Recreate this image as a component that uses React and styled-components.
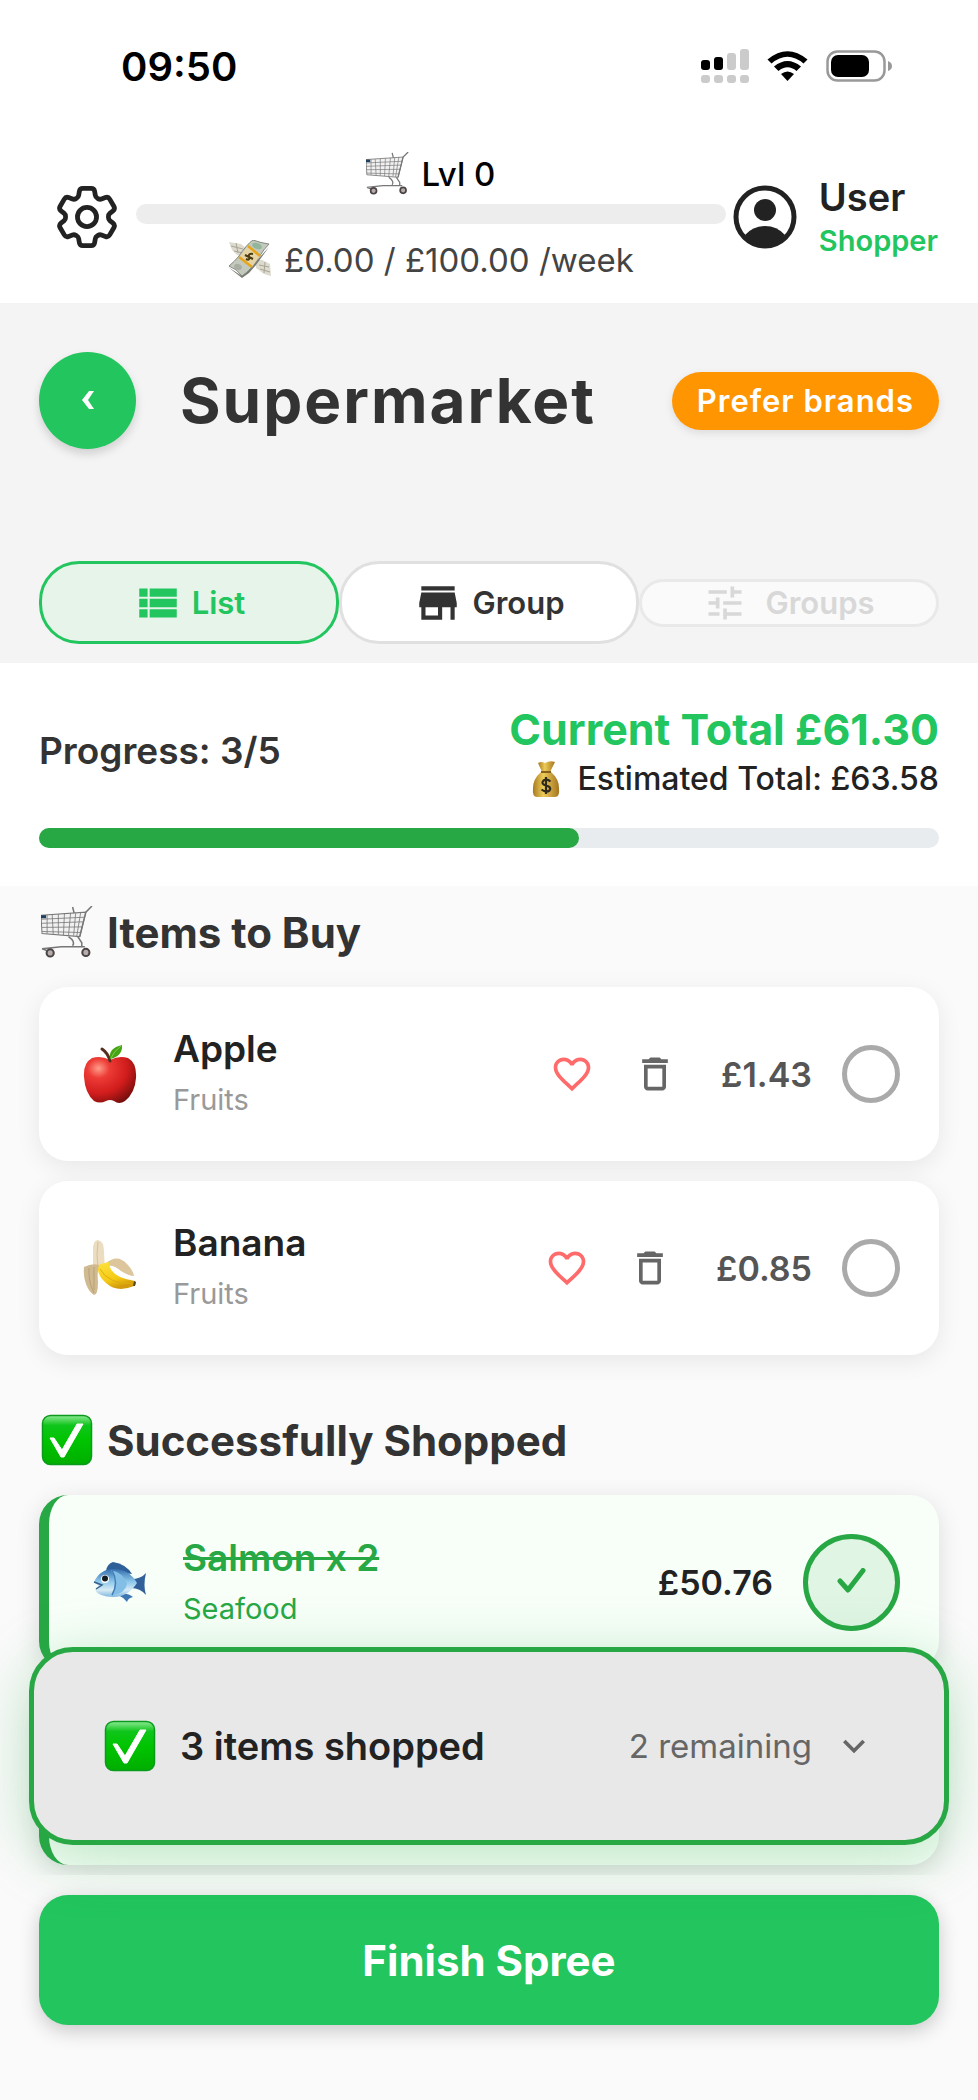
import React, { useState } from "react";
import styled, { createGlobalStyle } from "styled-components";
import {
  MdViewList,
  MdStore,
  MdTune,
  MdFavoriteBorder,
  MdDeleteOutline,
  MdExpandMore,
} from "react-icons/md";
import { HiOutlineCog6Tooth } from "react-icons/hi2";

const GlobalStyle = createGlobalStyle`
  * {
    box-sizing: border-box;
  }

  body {
    margin: 0;
    background-color: #fafafa;
    color: #222;
    font-family: Inter, "Liberation Sans", sans-serif;
  }

  button {
    font-family: inherit;
    cursor: pointer;
  }

  svg {
    display: block;
    flex-shrink: 0;
  }
`;

const Page = styled.div`
  display: flex;
  flex-direction: column;
  min-height: 100vh;
`;

const StatusBar = styled.div`
  display: flex;
  align-items: center;
  justify-content: space-between;
  height: 130px;
  padding: 2px 86px 0 121px;
  background-color: #fff;
`;

const Time = styled.span`
  font-size: 40px;
  font-weight: 600;
  color: #000;
`;

const StatusIcons = styled.div`
  display: flex;
  align-items: center;
  gap: 18px;
`;

const Header = styled.header`
  display: flex;
  align-items: center;
  padding: 22px 40px 22px 56px;
  background-color: #fff;
`;

const IconButton = styled.button`
  display: flex;
  padding: 0;
  border: none;
  background-color: transparent;
  color: ${({ $color }) => $color || "#222"};
`;

const Level = styled.div`
  flex: 1;
  display: flex;
  flex-direction: column;
  align-items: center;
  margin: 0 7px 0 18px;
`;

const LevelRow = styled.div`
  display: flex;
  align-items: center;
  gap: 12px;
  font-size: 33px;
  line-height: 42px;
  font-weight: ${({ $muted }) => ($muted ? 400 : 500)};
  color: ${({ $muted }) => ($muted ? "#444" : "#000")};
`;

const LevelBar = styled.div`
  width: 100%;
  height: 20px;
  margin: 9px 0 15px;
  border-radius: 10px;
  background-color: #ededed;
`;

const Profile = styled.a`
  display: flex;
  align-items: center;
  gap: 22px;
  color: #222;
  text-decoration: none;
`;

const ProfileText = styled.div`
  display: flex;
  flex-direction: column;
  padding-top: 4px;
  line-height: 44px;
`;

const ProfileName = styled.span`
  font-size: 38px;
  font-weight: 600;
`;

const ProfileRole = styled.span`
  font-size: 29px;
  font-weight: 600;
  color: #22c55e;
`;

const StoreBar = styled.section`
  padding: 49px 39px 19px;
  background-color: #f4f4f4;
`;

const TitleRow = styled.div`
  display: flex;
  align-items: center;
`;

const BackButton = styled.button`
  display: flex;
  align-items: center;
  justify-content: center;
  width: 97px;
  height: 97px;
  border: none;
  border-radius: 50%;
  background-color: #22c55e;
  box-shadow: 0 5px 10px rgba(0, 0, 0, 0.15);
`;

const Title = styled.h1`
  flex: 1;
  margin: 0 0 0 44px;
  font-size: 62px;
  font-weight: 700;
  letter-spacing: 2px;
  color: #333;
`;

const BrandBadge = styled.button`
  height: 58px;
  padding: 0 25px;
  border: none;
  border-radius: 29px;
  background-color: #ff9500;
  box-shadow: 0 3px 8px rgba(0, 0, 0, 0.1);
  color: #fff;
  font-size: 31px;
  font-weight: 600;
  letter-spacing: 1px;
`;

const Tabs = styled.nav`
  display: flex;
  align-items: center;
  margin-top: 112px;
`;

const Tab = styled.button`
  flex: 1;
  display: flex;
  align-items: center;
  justify-content: center;
  gap: 9px;
  height: 83px;
  padding: 0;
  border: 3px solid ${({ $active }) => ($active ? "#22c55e" : "#e0e0e0")};
  border-radius: 40px;
  background-color: ${({ $active }) => ($active ? "#e6f4ea" : "#fff")};
  color: ${({ $active }) => ($active ? "#22c55e" : "#333")};
  font-size: 31px;
  font-weight: 600;

  &:disabled {
    gap: 18px;
    height: 48px;
    border-color: #e9e9e9;
    border-radius: 24px;
    background-color: #fafafa;
    color: #d8d8d8;
    cursor: default;
  }
`;

const Totals = styled.section`
  padding: 41px 39px 38px;
  background-color: #fff;
`;

const TotalsRow = styled.div`
  display: flex;
  align-items: center;
  justify-content: space-between;
  line-height: 50px;
`;

const ProgressLabel = styled.span`
  padding-bottom: 6px;
  font-size: 37px;
  font-weight: 600;
  color: #333;
`;

const TotalsText = styled.div`
  display: flex;
  flex-direction: column;
  align-items: flex-end;
`;

const CurrentTotal = styled.span`
  font-size: 43px;
  font-weight: 700;
  color: #22c55e;
`;

const EstimatedTotal = styled.span`
  display: flex;
  align-items: center;
  gap: 17px;
  font-size: 32px;
  font-weight: 500;
`;

const ProgressTrack = styled.div`
  height: 20px;
  margin-top: 24px;
  border-radius: 10px;
  background-color: #e9ecef;
`;

const ProgressFill = styled.div`
  height: 100%;
  border-radius: 10px;
  background-color: #28a745;
`;

const ListArea = styled.main`
  position: relative;
`;

const Lists = styled.div`
  display: flex;
  flex-direction: column;
  gap: 59px;
  padding: 20px 39px 10px;
  overflow: hidden;
`;

const SectionTitle = styled.h2`
  display: flex;
  align-items: center;
  gap: 14px;
  height: 52px;
  margin: 0 0 29px;
  padding-left: 2px;
  font-size: 42px;
  font-weight: 700;
  color: #333;
`;

const Items = styled.ul`
  display: flex;
  flex-direction: column;
  gap: 20px;
  margin: 0;
  padding: 0;
  list-style: none;
`;

const Card = styled.li`
  display: flex;
  align-items: center;
  min-height: 174px;
  padding: 39px 39px 39px 44px;
  border-radius: 29px;
  background-color: #fff;
  box-shadow: 0 6px 24px rgba(0, 0, 0, 0.08);
`;

const ShoppedCard = styled(Card)`
  min-height: 175px;
  border-left: 10px solid #28a745;
  background-color: #f8fff9;
  box-shadow: 0 6px 24px rgba(0, 0, 0, 0.12);
`;

const ItemText = styled.div`
  flex: 1;
  display: flex;
  flex-direction: column;
  gap: 6px;
  margin-left: 36px;
  color: ${({ $done }) => ($done ? "#28a745" : "#222")};
`;

const ItemName = styled.span`
  font-size: 37px;
  line-height: 46px;
  font-weight: 600;
  text-decoration: ${({ $done }) => ($done ? "line-through" : "none")};
`;

const ItemCategory = styled.span`
  font-size: 29px;
  line-height: 44px;
  color: ${({ $done }) => ($done ? "#28a745" : "#999")};
`;

const ItemActions = styled.div`
  display: flex;
  gap: 39px;
  margin-right: 44px;
`;

const Price = styled.span`
  margin-right: 30px;
  font-size: 34px;
  font-weight: 600;
  color: ${({ $done }) => ($done ? "#222" : "#555")};
`;

const CheckLabel = styled.label`
  display: grid;
  place-items: center;

  & > * {
    grid-area: 1 / 1;
  }
`;

const CheckInput = styled.input`
  appearance: none;
  width: ${({ $done }) => ($done ? "97px" : "58px")};
  height: ${({ $done }) => ($done ? "97px" : "58px")};
  margin: 0;
  border: 5px solid ${({ $done }) => ($done ? "#28a745" : "#aaa")};
  border-radius: 50%;
  background-color: ${({ $done }) => ($done ? "#e1f5e5" : "#fff")};
`;

const Summary = styled.button`
  position: absolute;
  right: 29px;
  bottom: 30px;
  left: 29px;
  z-index: 2;
  display: flex;
  align-items: center;
  height: 198px;
  padding: 0 68px 0 70px;
  border: 5px solid #28a745;
  border-radius: 44px;
  background-color: #e8e8e8;
  box-shadow: 0 12px 60px rgba(40, 167, 69, 0.3);
  text-align: left;
`;

const SummaryCount = styled.span`
  flex: 1;
  margin-left: 24px;
  font-size: 38px;
  font-weight: 600;
  color: #222;
`;

const SummaryRest = styled.span`
  margin-right: 20px;
  font-size: 33px;
  color: #666;
`;

const Footer = styled.footer`
  padding: 20px 39px 75px;
`;

const FinishButton = styled.button`
  width: 100%;
  height: 130px;
  border: none;
  border-radius: 29px;
  background-color: #22c55e;
  box-shadow: 0 6px 20px rgba(0, 0, 0, 0.2);
  color: #fff;
  font-size: 42px;
  font-weight: 700;
`;

const SignalIcon = () => (
  <svg width="48" height="34" viewBox="0 0 48 34">
    <rect x="0" y="11" width="9" height="10" rx="3" fill="#000" />
    <rect x="13" y="8" width="9" height="13" rx="3" fill="#000" />
    <g fill="#cbcbcb">
      <rect x="26" y="4" width="9" height="17" rx="3" />
      <rect x="39" y="0" width="9" height="21" rx="3" />
      <rect x="0" y="26" width="9" height="8" rx="3" />
      <rect x="13" y="26" width="9" height="8" rx="3" />
      <rect x="26" y="26" width="9" height="8" rx="3" />
      <rect x="39" y="26" width="9" height="8" rx="3" />
    </g>
  </svg>
);

const WifiIcon = () => (
  <svg width="41" height="30" viewBox="0 0 41 30">
    <path d="M0.5 8.5Q20.5-8 40.5 8.5L36.5 12.5Q20.5-1 4.5 12.5Z" />
    <path d="M7 15.5Q20.5 4.5 34 15.5L29.5 20Q20.5 12.5 11.5 20Z" />
    <path d="M14 23Q20.5 18 27 23L20.5 30Z" />
  </svg>
);

const BatteryIcon = () => (
  <svg width="66" height="32" viewBox="0 0 66 32">
    <rect x="1.5" y="1.5" width="57" height="29" rx="10" fill="none" stroke="#999" strokeWidth="2.5" />
    <rect x="5" y="5" width="38" height="22" rx="7" fill="#000" />
    <path d="M62 11Q66 12.5 66 16T62 21Z" fill="#999" />
  </svg>
);

const UserIcon = () => (
  <svg width="64" height="64" viewBox="0 0 64 64" fill="#222">
    <circle cx="32" cy="32" r="29" fill="none" stroke="#222" strokeWidth="5" />
    <circle cx="32" cy="25" r="11" />
    <path d="M12 50Q20 41 32 41T52 50Q44 61 32 61T12 50Z" />
  </svg>
);

const CartIcon = ({ size }) => (
  <svg width={size} height={size} viewBox="0 0 51 51" fill="none" stroke="#777" strokeWidth="1">
    <path d="M0 9L44 6L38 30L1 27Z" fill="#f1f1f1" />
    <path d="M0 13L43 11M0 17L42 15.5M1 21L41 20.5M1 25L39 26M6 9V27M11 8.5L12 28M17 8V28M23 7.5L22 28.5M29 7L27 29M34 7L32 29M39 6L35 30" strokeWidth="0.8" />
    <path d="M50 0L44 6L38 30M31 1L32.5 7" strokeWidth="1.5" />
    <path d="M27 30Q34 35 31 39M36 30L40 36V40M1 42L20 40L43 40M1 42L9 45" strokeWidth="1.5" />
    <rect x="0" y="9" width="5" height="3" fill="#20405e" stroke="none" />
    <g fill="#b5acab" stroke="#4a4444" strokeWidth="2">
      <circle cx="9" cy="46" r="3.5" />
      <circle cx="44" cy="45.5" r="3.5" />
    </g>
  </svg>
);

const CashIcon = () => (
  <svg width="44" height="40" viewBox="0 0 44 40">
    <path d="M1 2L13 4L20 10L16 17L9 15L4 10Z" fill="#dddace" />
    <path d="M3 6L15 9M6 11L15 13M8 3L10 13" stroke="#a9a698" fill="none" />
    <path d="M27 20L34 20L42 24L43 36L36 34L28 28Z" fill="#dddace" />
    <path d="M31 25L41 27M32 29L42 32M37 22L36 33" stroke="#a9a698" fill="none" />
    <path d="M0 27L14 38L21 33L28 25L41 7L32 17L14 36Z" fill="#777b73" />
    <path d="M1 26Q7 21 11 16Q19 4 25 0Q33 3 41 4Q36 9 31 17Q23 30 14 36Q9 29 1 26Z" fill="#c4c9bd" stroke="#858a7f" />
    <ellipse cx="29" cy="6" rx="5" ry="3" fill="#91b69b" transform="rotate(20 29 6)" />
    <ellipse cx="10" cy="27" rx="4" ry="3" fill="#a9aea2" transform="rotate(20 10 27)" />
    <path d="M20 6L32 16L24 27L11 17Z" fill="#e5d4a6" />
    <path d="M20 6L32 16M11 17L24 27" stroke="#e5a51d" strokeWidth="2.5" />
    <path d="M18 19Q22 21 21 17T25 14M17 15L25 19" stroke="#4c3a10" strokeWidth="2" fill="none" />
  </svg>
);

const MoneyBagIcon = () => (
  <svg width="28" height="37" viewBox="0 0 28 37">
    <defs>
      <linearGradient id="bag">
        <stop stopColor="#a87a20" />
        <stop offset="0.4" stopColor="#edcb58" />
        <stop offset="1" stopColor="#a47420" />
      </linearGradient>
    </defs>
    <path d="M6 2Q9 0 13 2Q18-1 23 1L18 11H10Z" fill="url(#bag)" />
    <path d="M9 11H19Q27 18 27 27Q28 36 23 36H5Q0 36 1 27Q1 18 9 11Z" fill="url(#bag)" />
    <path d="M9 11H19" stroke="#89601a" strokeWidth="2" />
    <path d="M18.5 20.5Q15 17.5 11.5 19.5Q8.5 23 14 24.5Q20 26 17.5 29.5Q14 32 9.5 28.5M14 16V33" stroke="#302a1b" strokeWidth="2.2" fill="none" />
  </svg>
);

const CheckEmoji = () => (
  <svg width="52" height="52" viewBox="0 0 52 52">
    <defs>
      <linearGradient id="check" x2="0" y2="1">
        <stop stopColor="#8de994" />
        <stop offset="0.2" stopColor="#0fc51b" />
        <stop offset="0.5" stopColor="#00c400" />
        <stop offset="1" stopColor="#00ae00" />
      </linearGradient>
    </defs>
    <rect x="1.5" y="1.5" width="49" height="49" rx="8" fill="url(#check)" stroke="#0a9b1c" strokeWidth="1.5" />
    <path d="M9 24H13L21 36L36 10H42L23 43H20Z" fill="#fff" stroke="#fff" strokeLinejoin="round" />
  </svg>
);

const AppleIcon = () => (
  <svg width="54" height="60" viewBox="0 0 54 60">
    <defs>
      <radialGradient id="apple" cx="0.28" cy="0.25" r="0.85">
        <stop stopColor="#ff9c8a" />
        <stop offset="0.25" stopColor="#ed3b36" />
        <stop offset="0.65" stopColor="#d01c1c" />
        <stop offset="1" stopColor="#760e0c" />
      </radialGradient>
    </defs>
    <path d="M27 16Q36 11 45 14Q54 19 53 34Q52 49 42 57Q36 61 31 57Q27 55 23 57Q17 60 11 57Q2 49 1 33Q0 19 9 14Q18 11 27 16Z" fill="url(#apple)" />
    <path d="M27 17Q25 9 19 5" stroke="#552e20" strokeWidth="3" strokeLinecap="round" fill="none" />
    <path d="M27 15Q25 4 39 1Q40 12 27 15Z" fill="#46a414" />
    <path d="M28 14Q31 7 38 2" stroke="#80c94b" fill="none" />
  </svg>
);

const BananaIcon = () => (
  <svg width="54" height="60" viewBox="0 0 54 60">
    <defs>
      <linearGradient id="banana" x2="0.4" y2="1">
        <stop stopColor="#ffe33e" />
        <stop offset="0.7" stopColor="#f4c914" />
        <stop offset="1" stopColor="#d29a0d" />
      </linearGradient>
    </defs>
    <path d="M10 9Q11 2 15 2Q21 3 21 14L22 32H10Z" fill="#ecdcc0" />
    <path d="M15 4Q13 16 15 30" stroke="#d6c19d" fill="none" />
    <path d="M22 26Q34 15 44 26Q50 32 51 38Q46 38 38 33Q31 27 25 28Z" fill="#ddc69b" />
    <path d="M18 26L26 24Q26 39 52 43Q54 46 51 48Q34 55 23 45Q13 36 15 27Z" fill="url(#banana)" />
    <path d="M17 31Q25 46 50 46" stroke="#dfad0f" fill="none" />
    <path d="M51 43L53 44L52 48L50 48Z" fill="#594925" />
    <path d="M1 29Q9 25 16 27Q14 34 15 44Q15 57 11 57Q6 54 3 46Q0 38 1 29Z" fill="#d0ba91" />
    <path d="M6 30Q5 43 11 55M11 29L11 52" stroke="#b9a174" fill="none" />
  </svg>
);

const FishIcon = () => (
  <svg width="54" height="44" viewBox="0 0 54 44">
    <defs>
      <linearGradient id="fish" x2="0" y2="1">
        <stop stopColor="#356fae" />
        <stop offset="0.45" stopColor="#8dc8ec" />
        <stop offset="0.75" stopColor="#d7ebf4" />
        <stop offset="1" stopColor="#7eb6df" />
      </linearGradient>
    </defs>
    <path d="M13 10Q14 3 20 1Q33 3 39 13Z" fill="#2e5f98" />
    <path d="M38 18Q48 18 53 12Q50 24 53 34Q47 27 38 27Z" fill="#315f99" />
    <path d="M29 32Q37 33 40 36Q35 37 34 41Q30 36 25 34Z" fill="#3d77b4" />
    <path d="M1 21Q7 8 21 8Q36 8 44 22Q35 36 20 36Q6 36 2 29L6 25Z" fill="url(#fish)" />
    <path d="M18 9Q26 21 19 34Q32 33 34 23Q31 12 18 9Z" fill="#82bee5" />
    <path d="M19 9Q26 22 19 34" stroke="#427eb5" strokeWidth="1.5" fill="none" />
    <path d="M1 21L9 24L3 28" stroke="#34618b" strokeWidth="1.5" fill="none" />
    <circle cx="12" cy="18" r="4" fill="#fff" />
    <circle cx="12" cy="17.5" r="3" fill="#151c24" />
  </svg>
);

const toBuy = [
  { name: "Apple", category: "Fruits", price: "£1.43", icon: <AppleIcon /> },
  { name: "Banana", category: "Fruits", price: "£0.85", icon: <BananaIcon /> },
];

const BuyItem = ({ item }) => (
  <Card>
    {item.icon}
    <ItemText>
      <ItemName>{item.name}</ItemName>
      <ItemCategory>{item.category}</ItemCategory>
    </ItemText>
    <ItemActions>
      <IconButton $color="#ff6b6b" aria-label={`Favourite ${item.name}`}>
        <MdFavoriteBorder size={44} />
      </IconButton>
      <IconButton $color="#666" aria-label={`Delete ${item.name}`}>
        <MdDeleteOutline size={44} />
      </IconButton>
    </ItemActions>
    <Price>{item.price}</Price>
    <CheckLabel>
      <CheckInput type="checkbox" aria-label={`Mark ${item.name} as shopped`} />
    </CheckLabel>
  </Card>
);

const App = () => {
  const [view, setView] = useState("list");
  const shopped = 3;
  const total = 5;

  return (
    <Page>
      <GlobalStyle />
      <StatusBar>
        <Time>09:50</Time>
        <StatusIcons>
          <SignalIcon />
          <WifiIcon />
          <BatteryIcon />
        </StatusIcons>
      </StatusBar>

      <Header>
        <IconButton aria-label="Settings">
          {/* tighter viewBox trims the empty border around the cog */}
          <HiOutlineCog6Tooth size={62} viewBox="2.25 2.25 19.5 19.5" />
        </IconButton>
        <Level>
          <LevelRow>
            <CartIcon size={43} />
            Lvl 0
          </LevelRow>
          <LevelBar />
          <LevelRow $muted>
            <CashIcon />
            £0.00 / £100.00 /week
          </LevelRow>
        </Level>
        <Profile href="#profile">
          <UserIcon />
          <ProfileText>
            <ProfileName>User</ProfileName>
            <ProfileRole>Shopper</ProfileRole>
          </ProfileText>
        </Profile>
      </Header>

      <StoreBar>
        <TitleRow>
          <BackButton aria-label="Back">
            <svg width="14" height="20" viewBox="0 0 14 20">
              <path d="M8 0H13L7 9L13 18H8L1 9Z" fill="#fff" />
            </svg>
          </BackButton>
          <Title>Supermarket</Title>
          <BrandBadge>Prefer brands</BrandBadge>
        </TitleRow>
        <Tabs>
          <Tab $active={view === "list"} onClick={() => setView("list")}>
            <MdViewList size={50} />
            List
          </Tab>
          <Tab $active={view === "group"} onClick={() => setView("group")}>
            <MdStore size={50} />
            Group
          </Tab>
          <Tab disabled>
            <MdTune size={44} />
            Groups
          </Tab>
        </Tabs>
      </StoreBar>

      <Totals>
        <TotalsRow>
          <ProgressLabel>
            Progress: {shopped}/{total}
          </ProgressLabel>
          <TotalsText>
            <CurrentTotal>Current Total £61.30</CurrentTotal>
            <EstimatedTotal>
              <MoneyBagIcon />
              Estimated Total: £63.58
            </EstimatedTotal>
          </TotalsText>
        </TotalsRow>
        <ProgressTrack
          role="progressbar"
          aria-label="Items shopped"
          aria-valuenow={shopped}
          aria-valuemax={total}
        >
          <ProgressFill style={{ width: `${(shopped / total) * 100}%` }} />
        </ProgressTrack>
      </Totals>

      <ListArea>
        <Lists>
          <section>
            <SectionTitle>
              <CartIcon size={52} />
              Items to Buy
            </SectionTitle>
            <Items>
              {toBuy.map((item) => (
                <BuyItem key={item.name} item={item} />
              ))}
            </Items>
          </section>
          <section>
            <SectionTitle>
              <CheckEmoji />
              Successfully Shopped
            </SectionTitle>
            <Items>
              <ShoppedCard>
                <FishIcon />
                <ItemText $done>
                  <ItemName $done>Salmon x 2</ItemName>
                  <ItemCategory $done>Seafood</ItemCategory>
                </ItemText>
                <Price $done>£50.76</Price>
                <CheckLabel>
                  <CheckInput $done type="checkbox" defaultChecked aria-label="Salmon shopped" />
                  <svg width="30" height="30" viewBox="0 0 30 30">
                    <path d="M3 13L11 22L26 2.5" fill="none" stroke="#28a745" strokeWidth="5" strokeLinecap="round" strokeLinejoin="round" />
                  </svg>
                </CheckLabel>
              </ShoppedCard>
              <ShoppedCard />
            </Items>
          </section>
        </Lists>
        <Summary aria-expanded="false">
          <CheckEmoji />
          <SummaryCount>{shopped} items shopped</SummaryCount>
          <SummaryRest>{total - shopped} remaining</SummaryRest>
          <MdExpandMore size={44} color="#666" />
        </Summary>
      </ListArea>

      <Footer>
        <FinishButton>Finish Spree</FinishButton>
      </Footer>
    </Page>
  );
};

export default App;
